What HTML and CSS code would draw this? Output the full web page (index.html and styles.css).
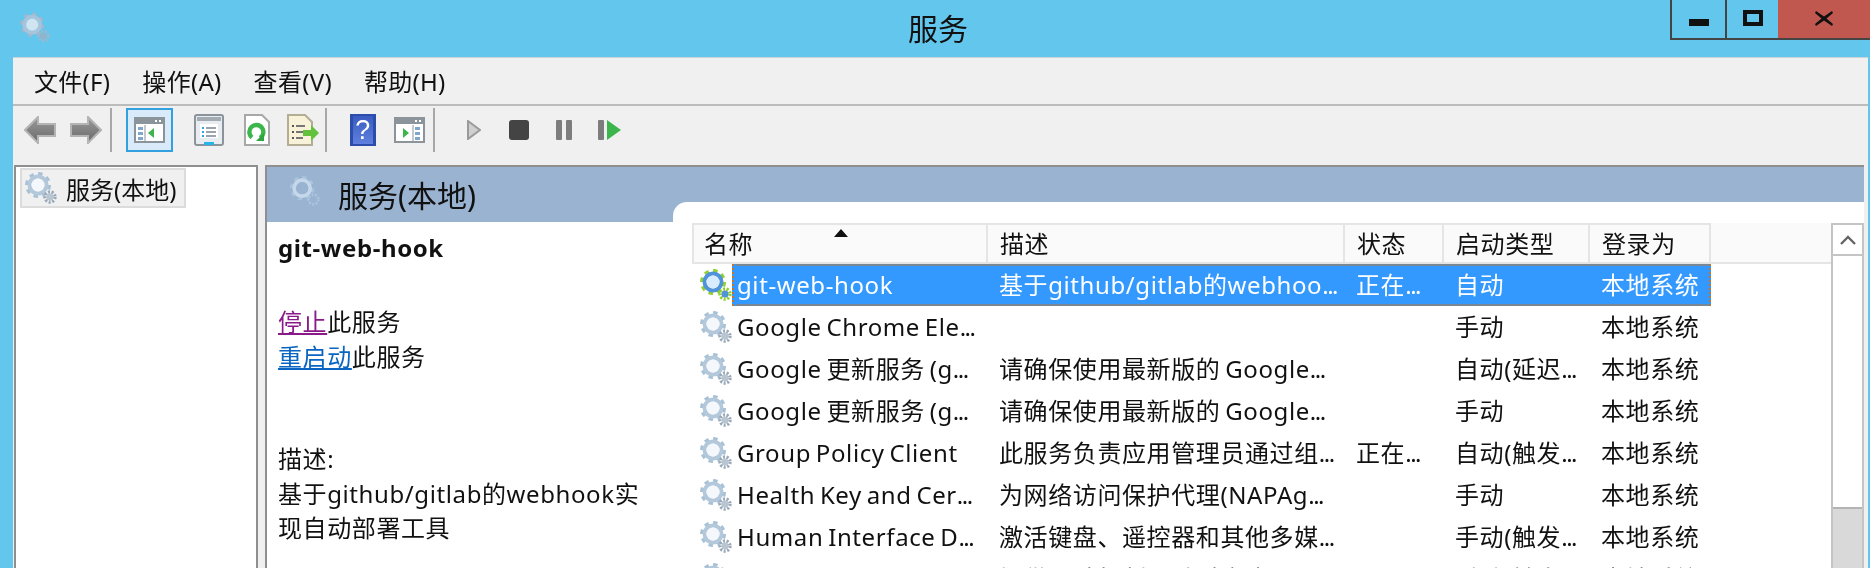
FILE: index.html

```html
<!DOCTYPE html>
<html lang="zh-CN">
<head>
  <meta charset="UTF-8" />
  <title>服务</title>
  <link rel="stylesheet" href="styles.css">
</head>
<body>
  <svg class="defs" width="0" height="0">
    <defs>
      <linearGradient id="arrow-fill" x1="0" y1="0" x2="0" y2="1">
        <stop offset="0" stop-color="#9a9a9a" />
        <stop offset="1" stop-color="#6a6a6a" />
      </linearGradient>
      <linearGradient id="help-fill" x1="0" y1="0" x2="0" y2="1">
        <stop offset="0" stop-color="#3a5cc0" />
        <stop offset="1" stop-color="#5f80de" />
      </linearGradient>
    </defs>
    <symbol id="gear" viewBox="0 0 32 32">
      <circle class="gear-teeth" cx="13" cy="13" r="11" stroke-width="4" stroke-dasharray="4.3 4.3" fill="none" />
      <circle class="gear-ring" cx="13" cy="13" r="8.5" stroke-width="4" fill="none" />
      <circle class="gear-hole" cx="13" cy="13" r="6.5" />
      <circle class="gear-small" cx="25" cy="25" r="5" stroke-width="3.4" stroke-dasharray="2 1.5" fill="none" />
      <circle class="gear-small-core" cx="25" cy="25" r="3.5" />
    </symbol>
    <symbol id="win" viewBox="0 0 31 26">
      <rect x="1" y="1" width="29" height="24" fill="#fff" stroke="#8b939b" stroke-width="2" />
      <rect x="1" y="1" width="29" height="6" fill="#8b939b" />
      <rect x="21" y="3" width="2" height="2" fill="#fff" />
      <rect x="25" y="3" width="2" height="2" fill="#fff" />
    </symbol>
  </svg>

  <div class="window">
    <header class="titlebar">
      <svg class="app-icon"><use href="#gear" /></svg>
      <div class="title">服务</div>
      <div class="win-buttons">
        <div class="win-btn win-min"><span></span></div>
        <div class="win-btn win-max"><span></span></div>
        <div class="win-btn win-close">
          <svg width="18" height="15" viewBox="0 0 18 15"><path d="M1 0L9 5.5L17 0L18 2L11.5 7.5L18 13L17 15L9 9.5L1 15L0 13L6.5 7.5L0 2Z" fill="#111" /></svg>
        </div>
      </div>
    </header>

    <div class="inner">
      <nav class="menu">
        <span>文件(F)</span>
        <span>操作(A)</span>
        <span>查看(V)</span>
        <span>帮助(H)</span>
      </nav>

      <div class="toolbar">
        <div class="tool">
          <svg width="32" height="28" viewBox="0 0 32 28"><path d="M14 1L1 14L14 27V20H31V8H14Z" fill="url(#arrow-fill)" stroke="#b4b4b4" stroke-width="2" /></svg>
        </div>
        <div class="tool">
          <svg width="32" height="28" viewBox="0 0 32 28"><path d="M18 1L31 14L18 27V20H1V8H18Z" fill="url(#arrow-fill)" stroke="#b4b4b4" stroke-width="2" /></svg>
        </div>
        <div class="sep sep-first"></div>

        <div class="tool tool-active">
          <svg width="31" height="26" viewBox="0 0 31 26">
            <use href="#win" width="31" height="26" />
            <path d="M4 10h5v3H4zM4 15h5v3H4zM4 20h5v3H4z" fill="#7fa6cc" />
            <path d="M11 8V24" stroke="#8b939b" />
            <path d="M20 11V21L14 16Z" fill="#3cb54a" />
          </svg>
        </div>
        <div class="tool">
          <svg width="30" height="32" viewBox="0 0 30 32">
            <rect x="1" y="1" width="28" height="30" rx="2" fill="#e9edf2" stroke="#8b939b" stroke-width="2" />
            <rect x="3" y="3" width="24" height="4" fill="#a4abb3" />
            <rect x="6" y="10" width="18" height="14" fill="#fff" />
            <path d="M8 13h2v2H8zM8 17h2v2H8zM8 21h2v2H8z" fill="#28a8e0" />
            <path d="M12 14h10M12 18h10M12 22h10" stroke="#7b8794" stroke-width="1.5" />
            <rect x="10" y="28" width="10" height="3" fill="#28b4ea" />
          </svg>
        </div>
        <div class="tool nudge">
          <svg width="26" height="32" viewBox="0 0 26 32">
            <path d="M1 1H18L25 8V31H1Z" fill="#fff" stroke="#a8a8a8" stroke-width="2" />
            <path d="M8 23.5a7 7 0 1 1 8 .5" fill="none" stroke="#3cb54a" stroke-width="4.4" />
            <path d="M12 27L20 27L20 19Z" fill="#2fa33d" />
          </svg>
        </div>
        <div class="tool nudge">
          <svg width="32" height="32" viewBox="0 0 32 32">
            <path d="M1 1H18L25 8V31H1Z" fill="#f8f2d8" stroke="#b3ad94" stroke-width="2" />
            <path d="M5 11h2v2H5zM5 17h2v2H5zM5 23h2v2H5z" fill="#555" />
            <path d="M9 12h9M9 18h7M9 24h7" stroke="#777" stroke-width="2" />
            <path d="M16 16H24V11L32 19L24 27V22H16Z" fill="#62c23c" />
          </svg>
        </div>
        <div class="sep"></div>

        <div class="tool">
          <svg width="26" height="32" viewBox="0 0 26 32">
            <rect width="26" height="32" fill="#2c4dab" />
            <rect x="3" y="2" width="20" height="28" fill="url(#help-fill)" />
            <text x="13" y="25" class="help-mark">?</text>
          </svg>
        </div>
        <div class="tool">
          <svg width="31" height="26" viewBox="0 0 31 26">
            <use href="#win" width="31" height="26" />
            <path d="M21 10h5v3H21zM21 15h5v3H21zM21 20h5v3H21z" fill="#7fa6cc" />
            <path d="M19 8V24" stroke="#8b939b" />
            <path d="M9 11V21L15 16Z" fill="#3cb54a" />
          </svg>
        </div>
        <div class="sep sep-last"></div>

        <div class="tool media">
          <svg width="14" height="20" viewBox="0 0 14 20"><path d="M1 1L13 10L1 19Z" fill="#cfcfcf" stroke="#9a9a9a" stroke-width="2" /></svg>
        </div>
        <div class="tool media">
          <svg width="20" height="20" viewBox="0 0 20 20"><rect width="20" height="20" rx="3" fill="#444" /></svg>
        </div>
        <div class="tool media">
          <svg width="16" height="20" viewBox="0 0 16 20"><rect x="0" width="6" height="20" rx="1" fill="#7d7d7d" /><rect x="10" width="6" height="20" rx="1" fill="#7d7d7d" /></svg>
        </div>
        <div class="tool media">
          <svg width="23" height="20" viewBox="0 0 23 20"><rect width="6" height="20" rx="1" fill="#7d7d7d" /><path d="M9 0L23 10L9 20Z" fill="#3cb54a" /></svg>
        </div>
      </div>

      <div class="panes">
        <aside class="tree">
          <div class="tree-item">
            <svg class="gear"><use href="#gear" /></svg>
            <span>服务(本地)</span>
          </div>
        </aside>

        <section class="main">
          <div class="main-head">
            <svg class="head-icon"><use href="#gear" /></svg>
            <span>服务(本地)</span>
          </div>
          <div class="main-body">
            <div class="detail">
              <h4>git-web-hook</h4>
              <p class="actions"><a class="visited">停止</a>此服务<br><a>重启动</a>此服务</p>
              <p class="desc">描述:<br>基于github/gitlab的webhook实现自动部署工具</p>
            </div>

            <div class="list">
              <div class="table">
                <div class="thead">
                  <div class="th col-name">名称<i class="sort"></i></div>
                  <div class="th col-desc">描述</div>
                  <div class="th col-state">状态</div>
                  <div class="th col-start">启动类型</div>
                  <div class="th col-logon">登录为</div>
                </div>

                <div class="row">
                  <svg class="gear gear-on"><use href="#gear" /></svg>
                  <div class="cells selected">
                    <div class="cell first">git-web-hook</div>
                    <div class="cell">基于github/gitlab的webhoo<span class="more">...</span></div>
                    <div class="cell">正在<span class="more">...</span></div>
                    <div class="cell">自动</div>
                    <div class="cell">本地系统</div>
                  </div>
                </div>
                <div class="row">
                  <svg class="gear"><use href="#gear" /></svg>
                  <div class="cells">
                    <div class="cell first">Google Chrome Ele<span class="more">...</span></div>
                    <div class="cell"></div>
                    <div class="cell"></div>
                    <div class="cell">手动</div>
                    <div class="cell">本地系统</div>
                  </div>
                </div>
                <div class="row">
                  <svg class="gear"><use href="#gear" /></svg>
                  <div class="cells">
                    <div class="cell first">Google 更新服务 (g<span class="more">...</span></div>
                    <div class="cell">请确保使用最新版的 Google<span class="more">...</span></div>
                    <div class="cell"></div>
                    <div class="cell">自动(延迟<span class="more">...</span></div>
                    <div class="cell">本地系统</div>
                  </div>
                </div>
                <div class="row">
                  <svg class="gear"><use href="#gear" /></svg>
                  <div class="cells">
                    <div class="cell first">Google 更新服务 (g<span class="more">...</span></div>
                    <div class="cell">请确保使用最新版的 Google<span class="more">...</span></div>
                    <div class="cell"></div>
                    <div class="cell">手动</div>
                    <div class="cell">本地系统</div>
                  </div>
                </div>
                <div class="row">
                  <svg class="gear"><use href="#gear" /></svg>
                  <div class="cells">
                    <div class="cell first">Group Policy Client</div>
                    <div class="cell">此服务负责应用管理员通过组<span class="more">...</span></div>
                    <div class="cell">正在<span class="more">...</span></div>
                    <div class="cell">自动(触发<span class="more">...</span></div>
                    <div class="cell">本地系统</div>
                  </div>
                </div>
                <div class="row">
                  <svg class="gear"><use href="#gear" /></svg>
                  <div class="cells">
                    <div class="cell first">Health Key and Cer<span class="more">...</span></div>
                    <div class="cell">为网络访问保护代理(NAPAg<span class="more">...</span></div>
                    <div class="cell"></div>
                    <div class="cell">手动</div>
                    <div class="cell">本地系统</div>
                  </div>
                </div>
                <div class="row">
                  <svg class="gear"><use href="#gear" /></svg>
                  <div class="cells">
                    <div class="cell first">Human Interface D<span class="more">...</span></div>
                    <div class="cell">激活键盘、遥控器和其他多媒<span class="more">...</span></div>
                    <div class="cell"></div>
                    <div class="cell">手动(触发<span class="more">...</span></div>
                    <div class="cell">本地系统</div>
                  </div>
                </div>
                <div class="row">
                  <svg class="gear"><use href="#gear" /></svg>
                  <div class="cells">
                    <div class="cell first">Hyper-V Data Exc<span class="more">...</span></div>
                    <div class="cell">提供一种机制,以在虚拟机<span class="more">...</span></div>
                    <div class="cell"></div>
                    <div class="cell">手动(触发<span class="more">...</span></div>
                    <div class="cell">本地系统</div>
                  </div>
                </div>
              </div>

              <div class="scrollbar">
                <div class="scroll-up">
                  <svg width="16" height="10" viewBox="0 0 16 10"><path d="M1 9L8 2L15 9" fill="none" stroke="#666" stroke-width="2.4" /></svg>
                </div>
                <div class="scroll-track"></div>
                <div class="scroll-thumb"></div>
              </div>
            </div>
          </div>
        </section>
      </div>
    </div>
  </div>
</body>
</html>
```

FILE: styles.css

```css
* {
  box-sizing: border-box;
}
html, body {
  margin: 0;
  padding: 0;
  height: 568px;
  overflow: hidden;
  background: #63c6ec;
}
body {
  font-family: "Noto Sans", "Noto Sans CJK SC", sans-serif;
  font-size: 24px;
  letter-spacing: 0.6px;
  color: #111;
}
.defs {
  display: block;
  height: 0;
}

/* gear icon colours */
.gear-teeth { stroke: var(--gear-teeth, #a9c1d6); }
.gear-ring { stroke: var(--gear-ring, #b3c8da); }
.gear-hole { fill: var(--gear-hole, #f4f8fc); }
.gear-small { stroke: var(--gear-teeth, #9aa9b8); }
.gear-small-core { fill: var(--gear-small, #b9c6d2); }

.window {
  width: 1870px;
  height: 568px;
  display: flex;
  flex-direction: column;
  background: #63c6ec;
  filter: blur(0.5px);
}

/* title bar */
.titlebar {
  height: 57px;
  display: flex;
  flex: none;
  position: relative;
  padding-left: 20px;
}
.app-icon {
  width: 30px;
  height: 31px;
  margin-top: 12px;
  --gear-teeth: #9db8cf;
  --gear-ring: #a9c4da;
  --gear-hole: #cfe6f2;
  --gear-small: #8fb5cc;
}
.title {
  position: absolute;
  left: 0;
  right: 0;
  top: 9px;
  text-align: center;
  font-size: 30px;
  letter-spacing: 0;
  line-height: 40px;
  padding-left: 6px;
}
.win-buttons {
  margin-left: auto;
  display: flex;
  height: 40px;
  border: solid #444;
  border-width: 0 0 2px 2px;
  z-index: 1;
}
.win-btn {
  display: flex;
  justify-content: center;
}
.win-min {
  width: 55px;
  border-right: 2px solid #444;
}
.win-min span {
  width: 20px;
  height: 7px;
  margin-top: 19px;
  background: #111;
}
.win-max {
  width: 51px;
}
.win-max span {
  width: 20px;
  height: 16px;
  margin-top: 10px;
  border: 4px solid #111;
}
.win-close {
  width: 92px;
  background: #c0584f;
  padding-top: 11px;
}

.inner {
  flex: 1;
  min-height: 0;
  margin: 0 2px 0 13px;
  background: #f0f0f0;
  display: flex;
  flex-direction: column;
}

/* menu */
.menu {
  height: 49px;
  flex: none;
  display: flex;
  align-items: center;
  gap: 32px;
  padding: 0 0 2px 21px;
  letter-spacing: 0.3px;
  border-bottom: 2px solid #bcbcbc;
  border-top: 1px solid #c9d4da;
}

/* toolbar */
.toolbar {
  height: 59px;
  flex: none;
  display: flex;
  align-items: flex-start;
  padding: 2px 0 0 4px;
}
.tool {
  width: 46px;
  height: 44px;
  display: flex;
  align-items: center;
  justify-content: center;
}
.tool-active {
  width: 47px;
  margin-right: 13px;
  background: #d9ebfb;
  border: 2px solid #33a0e0;
}
.tool.nudge {
  margin: 0 -2px 0 2px;
}
.tool.media {
  margin-right: -1px;
}
.sep {
  width: 2px;
  height: 44px;
  background: #a8a8a8;
  margin: 0 13px 0 1px;
}
.sep-first {
  margin-right: 14px;
}
.sep-last {
  margin-right: 16px;
}
.help-mark {
  font-family: "Liberation Sans", sans-serif;
  font-size: 27px;
  fill: #fff;
  text-anchor: middle;
}

/* panes */
.panes {
  flex: 1;
  min-height: 0;
  display: flex;
  gap: 7px;
  padding-right: 4px;
  padding-left: 1px;
}
.tree {
  width: 244px;
  flex: none;
  background: #fff;
  border: solid #8f8f8f;
  border-width: 2px 2px 0;
  padding: 1px 0 0 4px;
}
.tree-item {
  width: 166px;
  height: 40px;
  display: flex;
  align-items: center;
  gap: 9px;
  padding-left: 3px;
  background: #f0f0f0;
  border: 2px solid #dcdcdc;
  letter-spacing: 0;
}
.gear {
  width: 32px;
  height: 32px;
  flex: none;
}
.main {
  flex: 1;
  min-width: 0;
  display: flex;
  flex-direction: column;
  border: solid #8f8f8f;
  border-width: 2px 0 0 2px;
  background: #fff;
}
.main-head {
  height: 55px;
  flex: none;
  display: flex;
  align-items: center;
  gap: 18px;
  padding-left: 23px;
  padding-bottom: 1px;
  background: #9ab3d1;
  font-size: 30px;
  letter-spacing: 0;
}
.head-icon {
  width: 30px;
  height: 30px;
  margin-top: -6px;
  --gear-teeth: #a9c4dc;
  --gear-ring: #c4d8ea;
  --gear-hole: #9ab3d1;
  --gear-small: #9ab3d1;
}
.main-body {
  flex: 1;
  min-height: 0;
  display: flex;
}

/* left description column */
.detail {
  width: 406px;
  flex: none;
  padding: 7px 0 0 11px;
  line-height: 34.5px;
}
.detail h4 {
  margin: 0;
  font-size: 24px;
  line-height: 38px;
  font-weight: bold;
}
.detail p {
  margin: 0;
}
.actions {
  padding-top: 38px;
}
.desc {
  padding-top: 68px;
  width: 375px;
}
.detail a {
  color: #0a66c2;
  text-decoration: underline;
}
.detail a.visited {
  color: #8a1a8a;
}

/* service list */
.list {
  flex: 1;
  min-width: 0;
  margin-top: -20px;
  display: flex;
  background: #fff;
  border-top-left-radius: 14px;
  padding: 21px 0 0 19px;
  overflow: hidden;
}
.table {
  flex: 1;
  min-width: 0;
}
.thead {
  height: 41px;
  display: grid;
  grid-template-columns: 296px 357px 99px 146px 121px;
  background: #fafafa;
  border-bottom: 2px solid #e5e5e5;
}
.th {
  position: relative;
  padding-left: 12px;
  line-height: 37px;
  border: solid #e5e5e5;
  border-width: 2px 2px 0 0;
}
.col-name {
  border-left: 2px solid #e5e5e5;
  padding-left: 10px;
}
.sort {
  position: absolute;
  left: 140px;
  top: 4px;
  border: solid transparent;
  border-width: 0 7px 8px;
  border-bottom-color: #111;
}
.row {
  height: 42px;
  display: flex;
  align-items: center;
  padding-left: 8px;
}
.gear-on {
  --gear-teeth: #8fcf2e;
  --gear-ring: #4f93d8;
  --gear-hole: #d8ecff;
  --gear-small: #4f93d8;
}
.cells {
  height: 42px;
  display: grid;
  grid-template-columns: 256px 357px 99px 146px 121px;
  line-height: 41px;
  white-space: nowrap;
  word-spacing: -2px;
}
.selected {
  background: #3399ff;
  color: #fff;
  outline: 2px dotted #c0752a;
  outline-offset: -2px;
}
.cell {
  padding-left: 11px;
  overflow: hidden;
}
.cell.first {
  padding-left: 5px;
}
.more {
  letter-spacing: -1.5px;
}

/* scrollbar */
.scrollbar {
  width: 33px;
  flex: none;
  display: flex;
  flex-direction: column;
  border: solid #c4c4c4;
  border-width: 0 2px;
}
.scroll-up {
  height: 33px;
  display: flex;
  align-items: center;
  justify-content: center;
  border: solid #c4c4c4;
  border-width: 2px 0;
}
.scroll-track {
  height: 251px;
  flex: none;
}
.scroll-thumb {
  flex: 1;
  background: #d9d9d9;
  border-top: 2px solid #b4b4b4;
}
```
